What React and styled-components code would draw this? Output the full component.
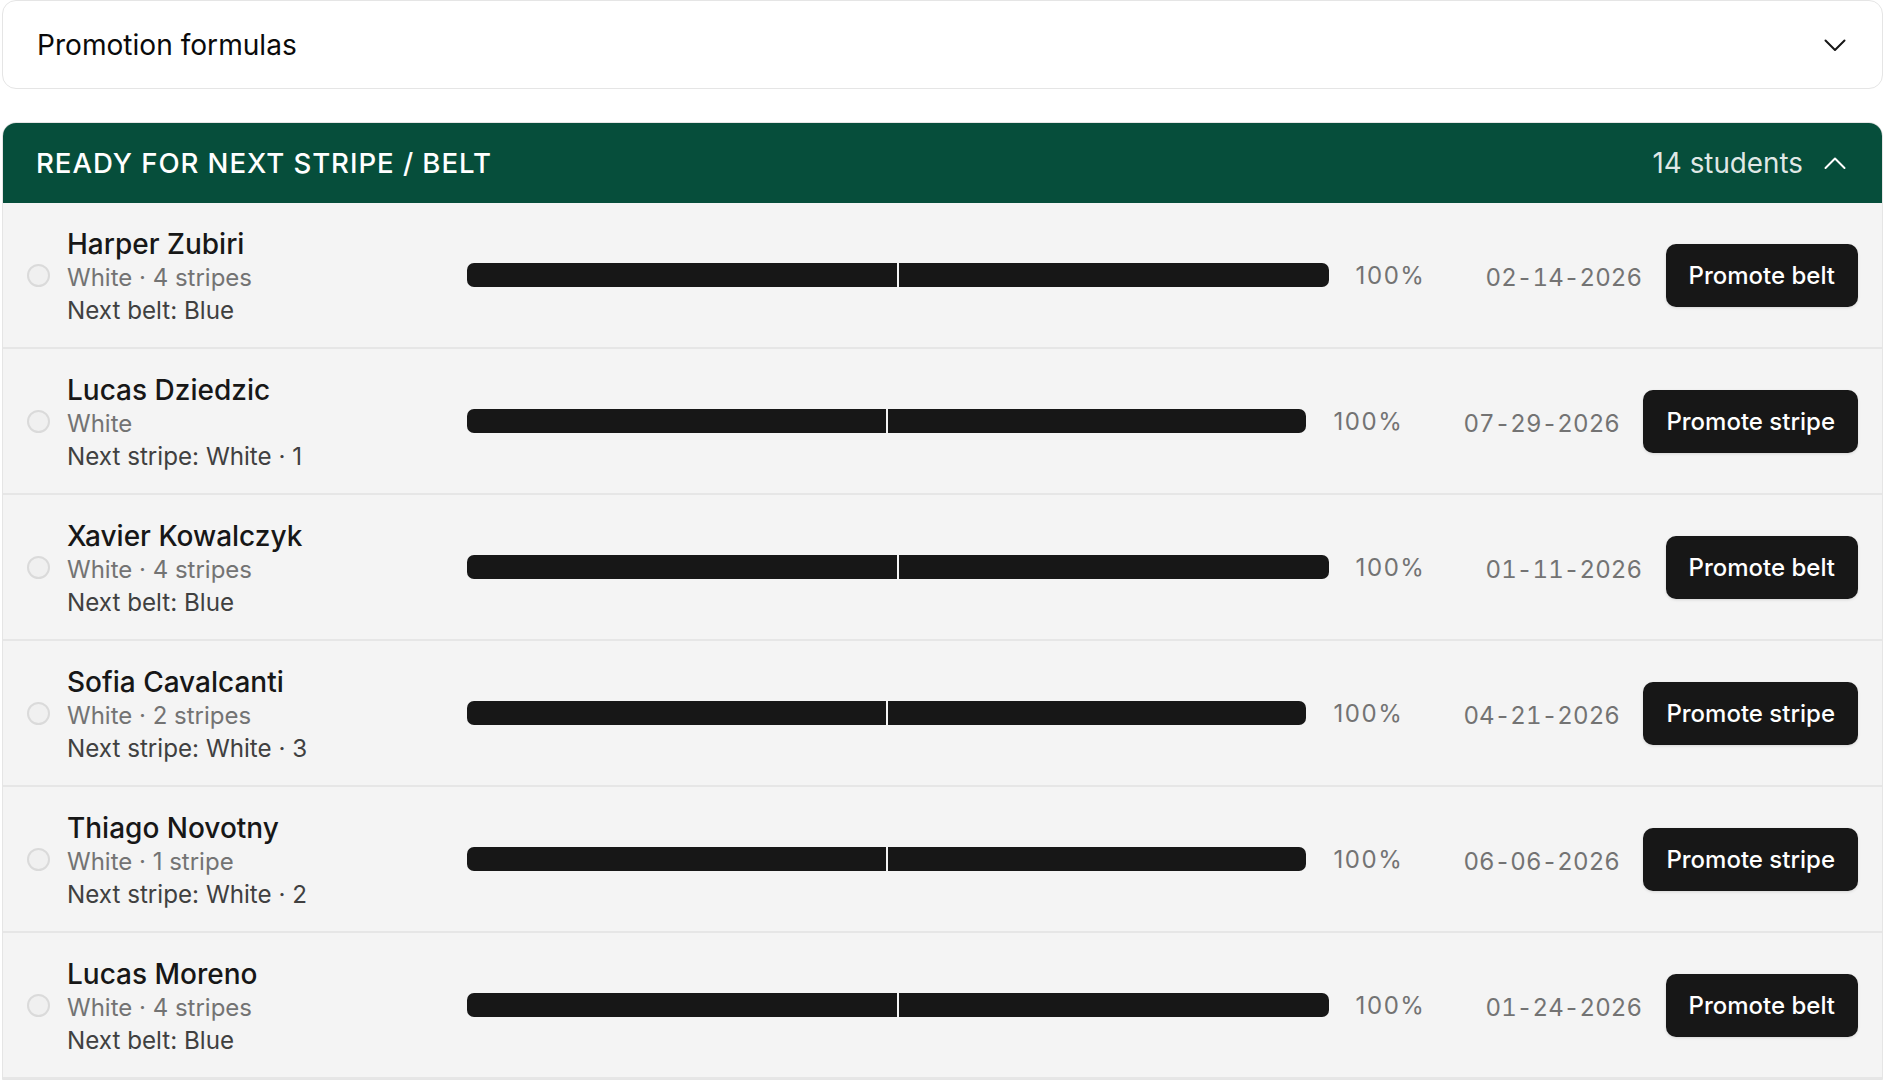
import React from "react";
import styled, { createGlobalStyle } from "styled-components";

const GlobalStyle = createGlobalStyle`
  html, body {
    margin: 0;
    padding: 0;
    background: #ffffff;
    overflow: hidden;
  }
  body {
    font-family: Inter, "Noto Sans", "Liberation Sans", sans-serif;
    color: #171717;
  }
  * {
    box-sizing: border-box;
  }
`;

const StyledPage = styled.div`
  display: flex;
  flex-direction: column;
  gap: 33px;
  padding: 0 1px 0 2px;
`;

const AccordionCard = styled.div`
  display: flex;
  align-items: center;
  justify-content: space-between;
  height: 89px;
  padding: 0 35px 0 34px;
  border: 1px solid #e5e5e5;
  border-radius: 14px;
  background: #ffffff;

  .card-title {
    font-size: 28.1px;
    font-weight: 400;
    color: #0a0a0a;
  }
`;

const Section = styled.section`
  border: 1px solid #e5e5e5;
  border-radius: 14px 14px 0 0;
  overflow: hidden;
  background: #f4f4f4;
`;

const SectionHeader = styled.div`
  display: flex;
  align-items: center;
  justify-content: space-between;
  height: 80px;
  padding: 0 35px 0 33px;
  background: #064e3b;
  color: #ffffff;

  .section-title {
    font-size: 27.6px;
    font-weight: 500;
    letter-spacing: 0.034em;
    text-transform: uppercase;
  }

  .section-count {
    display: flex;
    align-items: center;
    gap: 20px;
    font-size: 27.8px;
    color: rgba(255, 255, 255, 0.88);
  }
`;

const Row = styled.div`
  display: flex;
  align-items: center;
  height: 146px;
  padding: 0 24px;
  border-bottom: 2px solid #e6e6e6;
`;

const Radio = styled.span`
  flex-shrink: 0;
  width: 23px;
  height: 23px;
  margin-right: 17px;
  border: 2px solid #dadada;
  border-radius: 50%;
  background: #f0f0f0;
`;

const Info = styled.div`
  display: flex;
  flex-direction: column;
  width: 400px;
  flex-shrink: 0;
  padding-top: 3px;

  .name {
    font-size: 28px;
    line-height: 34px;
    font-weight: 500;
    color: #171717;
  }
  .rank {
    font-size: 24px;
    line-height: 33px;
    color: #737373;
  }
  .next {
    font-size: 24.2px;
    line-height: 33px;
    color: #404040;
  }
`;

const Bar = styled.div`
  display: flex;
  flex: 1;
  gap: 2px;
  height: 24px;

  span {
    flex: 1;
    background: #171717;
  }
  span:first-child {
    border-radius: 7px 0 0 7px;
  }
  span:last-child {
    border-radius: 0 7px 7px 0;
  }
`;

const Percent = styled.span`
  flex-shrink: 0;
  width: 157px;
  padding-left: 27px;
  font-size: 24px;
  letter-spacing: 1.6px;
  color: #737373;
`;

const DateText = styled.span`
  flex-shrink: 0;
  width: 180px;
  padding-top: 5px;
  font-size: 24px;
  letter-spacing: 0.1px;
  font-variant-numeric: tabular-nums;
  color: #737373;
`;

const PromoteButton = styled.button`
  flex-shrink: 0;
  height: 63px;
  padding: 0 23px;
  border: none;
  border-radius: 10px;
  background: #171717;
  color: #ffffff;
  font-family: inherit;
  font-size: 24px;
  font-weight: 500;
  box-shadow: 0 1px 3px rgba(0, 0, 0, 0.12);
  cursor: pointer;
`;

const Chevron = ({ up, color }) => (
  <svg width="24" height="24" viewBox="0 0 24 24" fill="none">
    <polyline
      points={up ? "2.5 17 12 7.5 21.5 17" : "2.5 7.5 12 17 21.5 7.5"}
      stroke={color}
      strokeWidth="2"
      strokeLinecap="round"
      strokeLinejoin="round"
    />
  </svg>
);

const students = [
  { name: "Harper Zubiri", rank: "White · 4 stripes", next: "Next belt: Blue", date: "02-14-2026", belt: true },
  { name: "Lucas Dziedzic", rank: "White", next: "Next stripe: White · 1", date: "07-29-2026", belt: false },
  { name: "Xavier Kowalczyk", rank: "White · 4 stripes", next: "Next belt: Blue", date: "01-11-2026", belt: true },
  { name: "Sofia Cavalcanti", rank: "White · 2 stripes", next: "Next stripe: White · 3", date: "04-21-2026", belt: false },
  { name: "Thiago Novotny", rank: "White · 1 stripe", next: "Next stripe: White · 2", date: "06-06-2026", belt: false },
  { name: "Lucas Moreno", rank: "White · 4 stripes", next: "Next belt: Blue", date: "01-24-2026", belt: true },
];

export default function App() {
  return (
    <>
      <GlobalStyle />
      <StyledPage>
        <AccordionCard>
          <span className="card-title">Promotion formulas</span>
          <Chevron color="#171717" />
        </AccordionCard>

        <Section>
          <SectionHeader>
            <span className="section-title">Ready for next stripe / belt</span>
            <span className="section-count">
              14 students
              <Chevron up color="#ffffff" />
            </span>
          </SectionHeader>

          {students.map((s) => (
            <Row key={s.name}>
              <Radio />
              <Info>
                <span className="name">{s.name}</span>
                <span className="rank">{s.rank}</span>
                <span className="next">{s.next}</span>
              </Info>
              <Bar>
                <span />
                <span />
              </Bar>
              <Percent>100%</Percent>
              <DateText>{s.date}</DateText>
              <PromoteButton>{s.belt ? "Promote belt" : "Promote stripe"}</PromoteButton>
            </Row>
          ))}
        </Section>
      </StyledPage>
    </>
  );
}
